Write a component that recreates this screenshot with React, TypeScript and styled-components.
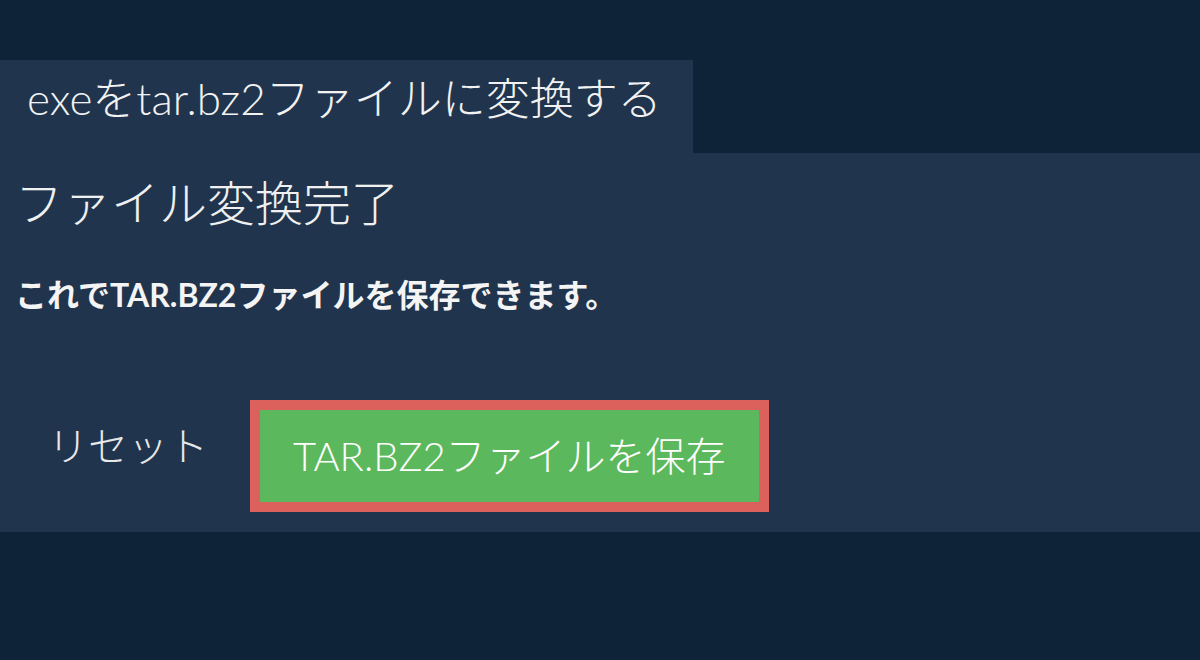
import React from "react";
import styled, { createGlobalStyle } from "styled-components";

const Global = createGlobalStyle`
  html, body {
    margin: 0;
    padding: 0;
    background: #0f2338;
  }
  body {
    font-family: "Lato", "Noto Sans CJK JP", sans-serif;
    color: #f2f2f2;
  }
  * { box-sizing: border-box; }
`;

const Page = styled.main`
  padding-top: 60px;
  min-height: 660px;
`;

const Tab = styled.h1`
  display: inline-block;
  margin: 0;
  padding: 12px 31px 28px 27px;
  background: #20354d;
  font-size: 44px;
  line-height: 53px;
  font-weight: 300;
  color: #f2f2f2;
  white-space: nowrap;
`;

const Panel = styled.section`
  background: #20354d;
  padding: 0 15px 20px;
`;

const Title = styled.h2`
  margin: 0;
  padding-top: 21px;
  font-size: 48px;
  line-height: 58px;
  font-weight: 300;
  color: #f0f0f0;
`;

const Message = styled.p`
  margin: 44px 0 0;
  font-size: 32px;
  line-height: 38px;
  font-weight: 700;
  color: #f4f4f4;
`;

const Actions = styled.div`
  display: flex;
  align-items: flex-start;
  gap: 9px;
  margin-top: 86px;
`;

const Button = styled.button<{ $primary?: boolean }>`
  font-family: "Lato", "Noto Sans CJK JP", sans-serif;
  font-size: 40px;
  line-height: 92px;
  font-weight: 300;
  padding: 0 33px;
  margin: 0;
  cursor: pointer;
  white-space: nowrap;
  color: ${(p) => (p.$primary ? "#ffffff" : "#e8e8e8")};
  background: ${(p) => (p.$primary ? "#5cb85c" : "transparent")};
  border: ${(p) => (p.$primary ? "10px solid #dc605c" : "0")};
`;

export default function App() {
  return (
    <>
      <Global />
      <Page>
        <Tab>exeをtar.bz2ファイルに変換する</Tab>
        <Panel>
          <Title>ファイル変換完了</Title>
          <Message>これでTAR.BZ2ファイルを保存できます。</Message>
          <Actions>
            <Button>リセット</Button>
            <Button $primary>TAR.BZ2ファイルを保存</Button>
          </Actions>
        </Panel>
      </Page>
    </>
  );
}
